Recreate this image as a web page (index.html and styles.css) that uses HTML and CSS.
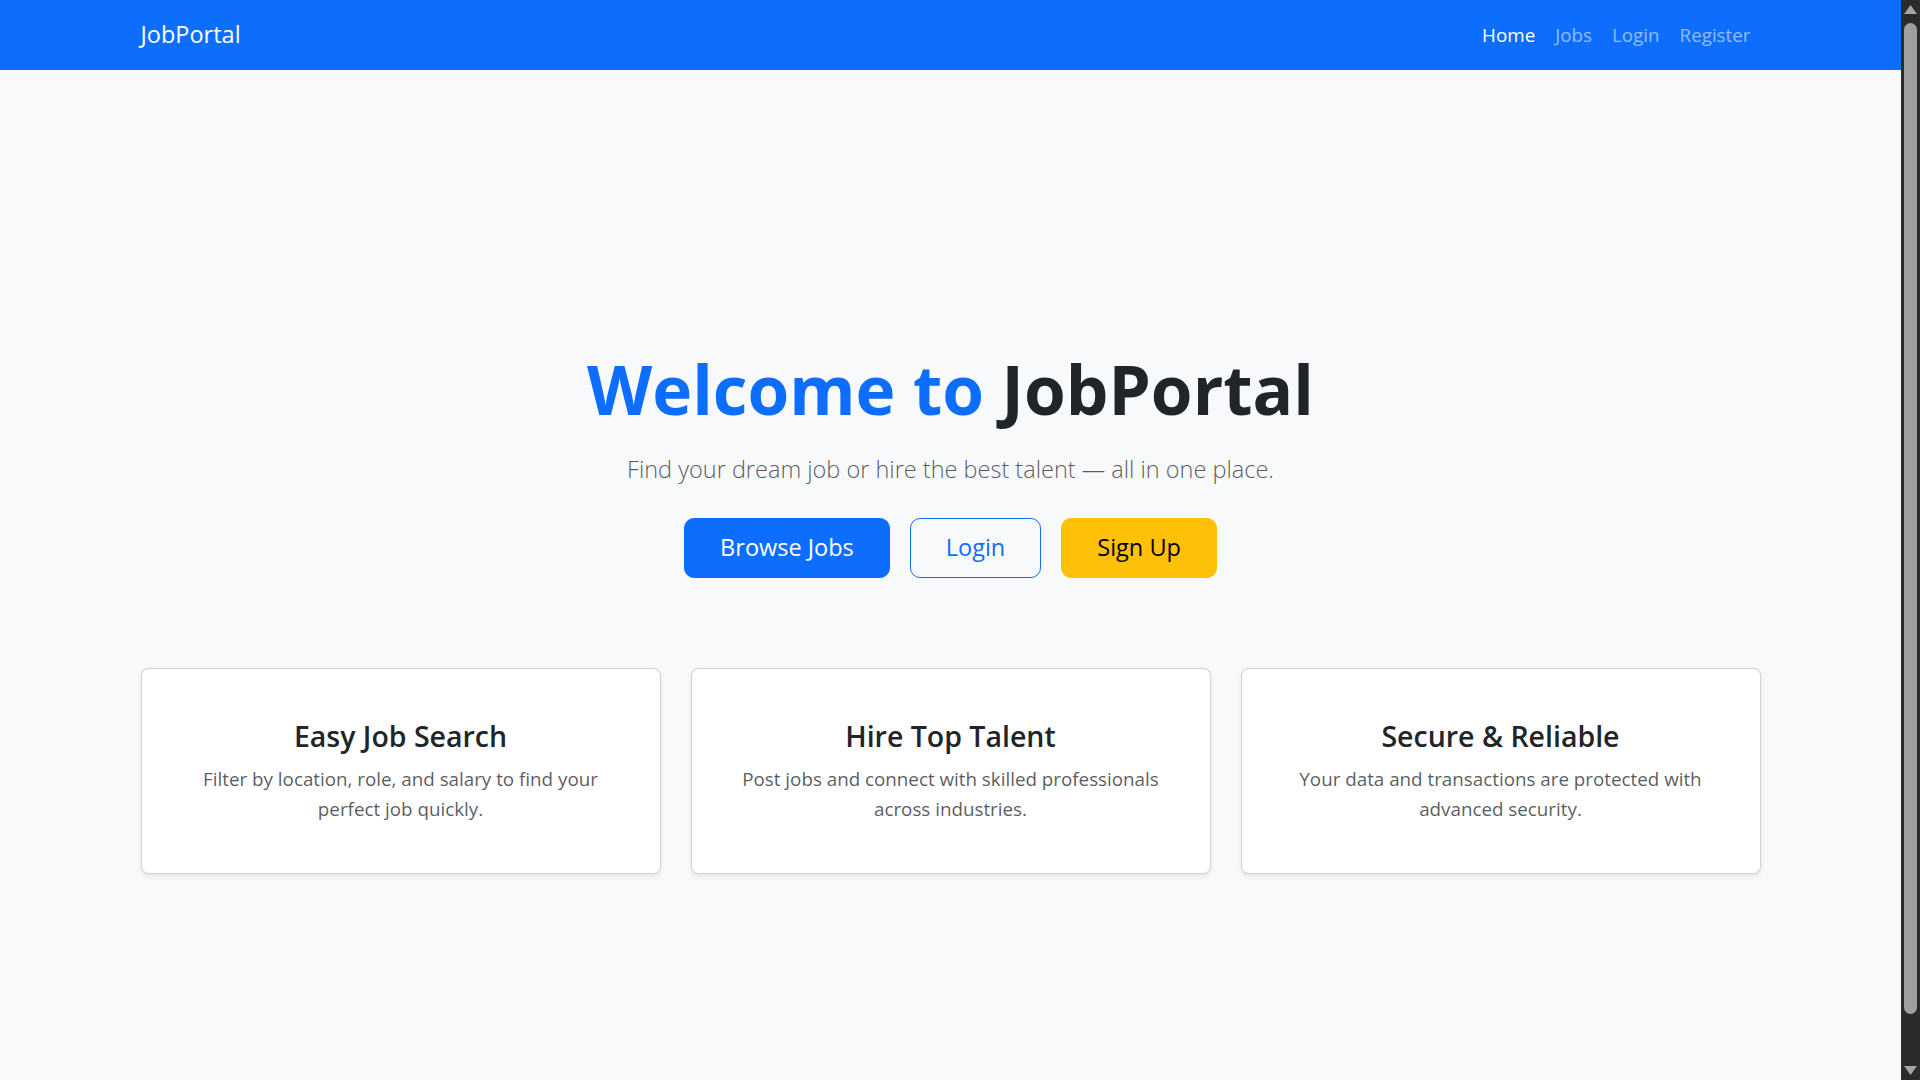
FILE: index.html
```html
<!DOCTYPE html>
<html lang="en">
<head>
<meta charset="utf-8">
<title>JobPortal</title>
<link rel="stylesheet" href="styles.css">
</head>
<body>
<nav class="navbar">
  <div class="container nav-inner">
    <a class="brand" href="#">JobPortal</a>
    <ul class="nav-links">
      <li><a class="nav-link active" href="#">Home</a></li>
      <li><a class="nav-link" href="#">Jobs</a></li>
      <li><a class="nav-link" href="#">Login</a></li>
      <li><a class="nav-link" href="#">Register</a></li>
    </ul>
  </div>
</nav>
<main class="page">
  <section class="hero">
    <h1 class="hero-title"><span class="accent">Welcome to</span> JobPortal</h1>
    <p class="lead">Find your dream job or hire the best talent — all in one place.</p>
    <div class="actions">
      <a class="btn btn-primary" href="#">Browse Jobs</a>
      <a class="btn btn-outline" href="#">Login</a>
      <a class="btn btn-warning" href="#">Sign Up</a>
    </div>
  </section>
  <section class="container features">
    <div class="card">
      <h4 class="card-title">Easy Job Search</h4>
      <p class="card-text">Filter by location, role, and salary to find your perfect job quickly.</p>
    </div>
    <div class="card">
      <h4 class="card-title">Hire Top Talent</h4>
      <p class="card-text">Post jobs and connect with skilled professionals across industries.</p>
    </div>
    <div class="card">
      <h4 class="card-title">Secure &amp; Reliable</h4>
      <p class="card-text">Your data and transactions are protected with advanced security.</p>
    </div>
  </section>
</main>
<div class="scrollbar" aria-hidden="true">
  <svg class="sb-arrow sb-up" width="19" height="19" viewBox="0 0 19 19"><polygon points="3,14 9.5,5 16,14" fill="#a3a3a3"/></svg>
  <div class="sb-track"><div class="sb-thumb"></div></div>
  <svg class="sb-arrow sb-down" width="19" height="19" viewBox="0 0 19 19"><polygon points="3,5 16,5 9.5,14" fill="#a3a3a3"/></svg>
</div>
</body>
</html>
```
FILE: styles.css
```css
* { box-sizing: border-box; }

html {
  background: #f8f9fa;
}

body {
  margin: 0 19px 0 0;
  font-family: "Open Sans", "Noto Sans", sans-serif;
  font-size: 18.8px;
  line-height: 30px;
  color: #212529;
  background: #f8f9fa;
}

a { text-decoration: none; }

.container {
  width: 100%;
  max-width: 1650px;
  margin: 0 auto;
  padding: 0 15px;
}

/* Navbar */
.navbar {
  background: #0d6efd;
  padding: 10px 0;
}
.nav-inner {
  display: flex;
  align-items: center;
  justify-content: space-between;
}
.brand {
  color: #fff;
  font-size: 23.5px;
  line-height: 37.5px;
  padding: 6.25px 0;
}
.nav-links {
  display: flex;
  list-style: none;
  margin: 0;
  padding: 0;
}
.nav-link {
  display: block;
  padding: 10px;
  font-size: 18.8px;
  line-height: 30px;
  color: rgba(255, 255, 255, 0.55);
}
.nav-link.active {
  color: #fff;
}

/* Page */
.page {
  min-height: 100vh;
  display: flex;
  flex-direction: column;
  justify-content: center;
}

.hero {
  text-align: center;
  margin-bottom: 90px;
}
.hero-title {
  margin: 0 0 20px;
  font-size: 67.5px;
  line-height: 84px;
  font-weight: 700;
  color: #212529;
}
.accent { color: #0d6efd; }

.lead {
  margin: 0 0 30px;
  font-size: 23.5px;
  line-height: 37.5px;
  font-weight: 300;
  color: rgba(33, 37, 41, 0.75);
}

.actions {
  display: flex;
  justify-content: center;
  gap: 20px;
}
.btn {
  display: inline-block;
  padding: 10px 35px;
  font-size: 23.5px;
  line-height: 37.5px;
  border: 1px solid transparent;
  border-radius: 10px;
}
.btn-primary {
  background: #0d6efd;
  border-color: #0d6efd;
  color: #fff;
}
.btn-outline {
  background: transparent;
  border-color: #0d6efd;
  color: #0d6efd;
}
.btn-warning {
  background: #ffc107;
  border-color: #ffc107;
  color: #000;
}

/* Features */
.features {
  display: grid;
  grid-template-columns: repeat(3, 1fr);
  gap: 30px;
}
.card {
  background: #fff;
  border: 1px solid rgba(0, 0, 0, 0.175);
  border-radius: 7.5px;
  box-shadow: 0 2.5px 5px rgba(0, 0, 0, 0.075);
  padding: 49px 50px;
  text-align: center;
}
.card-title {
  margin: 0 0 10px;
  font-size: 28.5px;
  line-height: 36px;
  font-weight: 600;
  color: #212529;
}
.card-text {
  margin: 0;
  font-size: 18.8px;
  line-height: 30px;
  color: rgba(33, 37, 41, 0.75);
}

/* Window scrollbar (drawn over the page edge) */
.scrollbar {
  position: fixed;
  top: 0;
  right: 0;
  width: 19px;
  height: 100vh;
  background: #2b2b2b;
  display: flex;
  flex-direction: column;
}
.sb-arrow {
  display: block;
  flex: none;
}
.sb-track {
  flex: 1;
  padding: 4px 3px 47px;
  display: flex;
}
.sb-thumb {
  flex: 1;
  background: #9f9f9f;
  border-radius: 7px;
}
```
